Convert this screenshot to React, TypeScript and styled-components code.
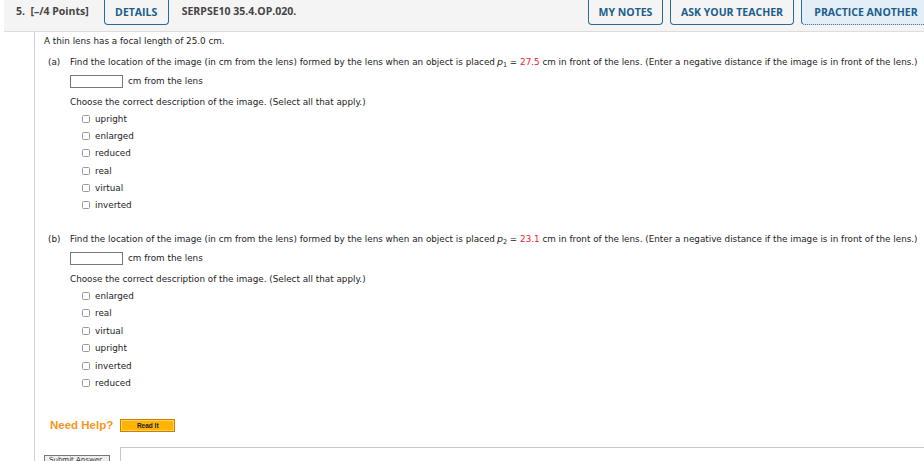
import styled, { createGlobalStyle } from 'styled-components'

const GlobalStyle = createGlobalStyle`
  body {
    margin: 0;
    background: #fff;
    overflow: hidden;
  }
`

const Page = styled.div`
  width: 924px;
  overflow: hidden;
  font-family: 'DejaVu Sans', Verdana, sans-serif;
  color: #222;
`

const Header = styled.header`
  display: flex;
  align-items: flex-start;
  margin-left: 4px;
  height: 31px;
  background: #f4f4f4;
  border-bottom: 1px solid #dcdcdc;
  font-family: 'Open Sans', sans-serif;
  font-weight: 700;
  font-size: 10.5px;
`

const HeaderLabel = styled.span<{ $gap: number }>`
  color: #444;
  line-height: 23px;
  margin-left: ${(p) => p.$gap}px;
  white-space: nowrap;
`

const TabButton = styled.span<{ $gap: number; $width: number; $active?: boolean }>`
  box-sizing: border-box;
  flex: none;
  width: ${(p) => p.$width}px;
  height: 25px;
  margin-left: ${(p) => p.$gap}px;
  display: flex;
  align-items: center;
  justify-content: center;
  color: #1b5d8c;
  background: ${(p) => (p.$active ? '#e4eef6' : 'transparent')};
  border: 1px solid #2b6a97;
  border-top: none;
  border-radius: 0 0 4px 4px;
  border-bottom-style: ${(p) => (p.$active ? 'dotted' : 'solid')};
  white-space: nowrap;
  &:last-child {
    margin-right: -7px;
  }
`

const Spacer = styled.div`
  flex: 1;
`

const Body = styled.main`
  margin-left: 34px;
  border-left: 1px solid #cfcfcf;
  padding: 3px 0 0 9px;
  font-size: 8.8px;
  min-height: 440px;
`

const Line = styled.div<{ $indent?: number; $top?: number }>`
  display: flex;
  align-items: center;
  margin-left: ${(p) => p.$indent ?? 0}px;
  margin-top: ${(p) => p.$top ?? 0}px;
  height: 12px;
  white-space: nowrap;
`

const PartTag = styled.span`
  width: 26px;
  padding-left: 4px;
  box-sizing: border-box;
  flex: none;
`

const Variable = styled.span`
  font-style: italic;
  font-size: 9.5px;
  margin-left: 2px;
  sub {
    font-style: normal;
    font-size: 6.5px;
    vertical-align: -2px;
  }
`

const Value = styled.span`
  color: #e8262a;
`

const AnswerBox = styled.span`
  display: inline-block;
  box-sizing: border-box;
  width: 53px;
  height: 13px;
  border: 1px solid #777;
  margin-right: 5px;
`

const OptionList = styled.div`
  display: flex;
  flex-direction: column;
  gap: 5.4px;
  margin: 4.5px 0 0 38px;
`

const Option = styled.label`
  display: flex;
  align-items: center;
  gap: 5px;
  height: 12px;
`

const Box = styled.span`
  box-sizing: border-box;
  width: 8px;
  height: 8px;
  border: 1px solid #999;
  border-radius: 1.5px;
  background: #fff;
`

const Help = styled.div`
  display: flex;
  align-items: center;
  gap: 7px;
  margin: 30px 0 0 6px;
`

const HelpText = styled.span`
  font-family: 'Liberation Sans', Arial, sans-serif;
  font-weight: 700;
  font-size: 11.5px;
  color: #f7941d;
`

const ReadIt = styled.span`
  box-sizing: border-box;
  width: 55px;
  height: 13px;
  display: flex;
  align-items: center;
  justify-content: center;
  background: #ffb400;
  border: 1px solid #d07e00;
  box-shadow: inset 0 0 0 1px #ffd15c;
  font-family: 'Liberation Sans', Arial, sans-serif;
  font-weight: 700;
  font-size: 6.5px;
  color: #222;
`

const Footer = styled.div`
  display: flex;
  align-items: flex-start;
  gap: 10px;
  margin-top: 15px;
`

const SubmitButton = styled.span`
  box-sizing: border-box;
  width: 66px;
  height: 14px;
  margin-top: 8px;
  background: #eee;
  border: 1px solid #777;
  font-size: 7px;
  color: #333;
  padding-left: 4px;
`

const Workspace = styled.div`
  flex: 1;
  height: 40px;
  border-top: 1px solid #c8c8c8;
  border-left: 1px solid #c8c8c8;
`

function Options({ items }: { items: string[] }) {
  return (
    <OptionList>
      {items.map((item) => (
        <Option key={item}>
          <Box />
          {item}
        </Option>
      ))}
    </OptionList>
  )
}

function Part({ tag, sub, value, top }: { tag: string; sub: string; value: string; top: number }) {
  return (
    <>
      <Line $top={top}>
        <PartTag>({tag})</PartTag>
        Find the location of the image (in cm from the lens) formed by the lens when an object is placed
        <Variable>
          p<sub>{sub}</sub>
        </Variable>
        &nbsp;=&nbsp;<Value>{value}</Value>&nbsp;cm in front of the lens. (Enter a negative distance if the
        image is in front of the lens.)
      </Line>
      <Line $indent={26} $top={7}>
        <AnswerBox />
        cm from the lens
      </Line>
      <Line $indent={26} $top={9}>
        Choose the correct description of the image. (Select all that apply.)
      </Line>
    </>
  )
}

export default function App() {
  return (
    <>
      <GlobalStyle />
      <Page>
        <Header>
          <HeaderLabel $gap={12}>5. &nbsp;[–/4 Points]</HeaderLabel>
          <TabButton $gap={15} $width={65}>DETAILS</TabButton>
          <HeaderLabel $gap={13}>SERPSE10 35.4.OP.020.</HeaderLabel>
          <Spacer />
          <TabButton $gap={0} $width={75}>MY NOTES</TabButton>
          <TabButton $gap={7} $width={124}>ASK YOUR TEACHER</TabButton>
          <TabButton $gap={7} $width={130} $active>PRACTICE ANOTHER</TabButton>
        </Header>
        <Body>
          <Line>A thin lens has a focal length of 25.0 cm.</Line>
          <Part tag="a" sub="1" value="27.5" top={9} />
          <Options items={['upright', 'enlarged', 'reduced', 'real', 'virtual', 'inverted']} />
          <Part tag="b" sub="2" value="23.1" top={22} />
          <Options items={['enlarged', 'real', 'virtual', 'upright', 'inverted', 'reduced']} />
          <Help>
            <HelpText>Need Help?</HelpText>
            <ReadIt>Read It</ReadIt>
          </Help>
          <Footer>
            <SubmitButton>Submit Answer</SubmitButton>
            <Workspace />
          </Footer>
        </Body>
      </Page>
    </>
  )
}
